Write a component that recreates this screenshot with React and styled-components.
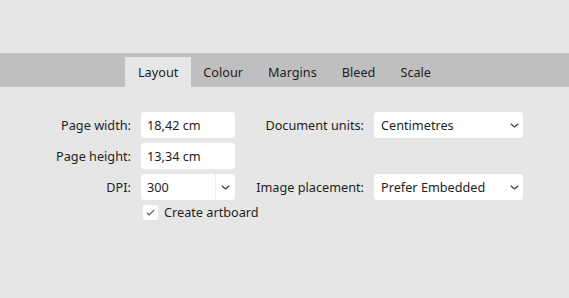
import React from 'react';
import styled, { createGlobalStyle } from 'styled-components';

const GlobalStyle = createGlobalStyle`
  html, body {
    margin: 0;
    padding: 0;
    background: #e6e6e6;
  }
  body {
    font-family: "Segoe UI", "Noto Sans", "Open Sans", sans-serif;
    color: #1e1e1e;
  }
`;

const Page = styled.div`
  width: 569px;
  height: 298px;
  background: #e6e6e6;
  padding-top: 53px;
  box-sizing: border-box;
`;

const TabBar = styled.div`
  height: 34px;
  background: #bfbfbf;
  display: flex;
  justify-content: center;
  align-items: flex-end;
`;

const Tab = styled.div`
  height: 30px;
  padding: 0 12.5px;
  display: flex;
  align-items: center;
  font-size: 12.7px;
  color: #1e1e1e;
  background: ${p => (p.$active ? '#e6e6e6' : 'transparent')};
`;

const Form = styled.div`
  display: grid;
  grid-template-columns: 131px 94px 119px 149px;
  grid-auto-rows: 26px;
  column-gap: 10px;
  row-gap: 5px;
  padding-top: 25px;
`;

const Label = styled.div`
  font-size: 12.7px;
  text-align: right;
  align-self: center;
  white-space: nowrap;
  color: #1e1e1e;
`;

const Field = styled.div`
  background: #fff;
  border-radius: 3px;
  display: flex;
  align-items: center;
  font-size: 12.7px;
  padding-left: ${p => p.$pad || 6}px;
  color: #1e1e1e;
  white-space: nowrap;
`;

const Value = styled.span`
  flex: 1;
`;

const ChevronBox = styled.div`
  width: ${p => p.$w}px;
  height: 100%;
  display: flex;
  align-items: center;
  justify-content: center;
  border-left: ${p => (p.$divider ? '1px solid #ececec' : 'none')};
  box-sizing: border-box;
`;

const CheckRow = styled.div`
  grid-column: 2 / span 3;
  align-self: start;
  display: flex;
  align-items: center;
  gap: 6px;
  font-size: 12.7px;
  margin-left: 2px;
  margin-top: -2px;
`;

const CheckBox = styled.div`
  width: 15px;
  height: 15px;
  background: #fff;
  border-radius: 2px;
  display: flex;
  align-items: center;
  justify-content: center;
`;

const Empty = styled.div``;

const Chevron = () => (
  <svg width="9" height="5" viewBox="0 0 9 5">
    <path d="M0.8 0.8 L4.5 4 L8.2 0.8" fill="none" stroke="#3a3a3a" strokeWidth="1.2" />
  </svg>
);

const Select = ({ value, divider, w }) => (
  <Field $pad={divider ? 6 : 7}>
    <Value>{value}</Value>
    <ChevronBox $w={w} $divider={divider}>
      <Chevron />
    </ChevronBox>
  </Field>
);

const tabs = ['Layout', 'Colour', 'Margins', 'Bleed', 'Scale'];

export default function App() {
  return (
    <>
      <GlobalStyle />
      <Page>
        <TabBar>
          {tabs.map(t => (
            <Tab key={t} $active={t === 'Layout'}>{t}</Tab>
          ))}
        </TabBar>
        <Form>
          <Label>Page width:</Label>
          <Field><Value>18,42 cm</Value></Field>
          <Label>Document units:</Label>
          <Select value="Centimetres" w={18} />

          <Label>Page height:</Label>
          <Field><Value>13,34 cm</Value></Field>
          <Empty />
          <Empty />

          <Label>DPI:</Label>
          <Select value="300" divider w={20} />
          <Label>Image placement:</Label>
          <Select value="Prefer Embedded" w={18} />

          <Empty />
          <CheckRow>
            <CheckBox>
              <svg width="9" height="7" viewBox="0 0 9 7">
                <path d="M0.8 3.6 L3.3 6 L8.2 0.8" fill="none" stroke="#555" strokeWidth="1.1" />
              </svg>
            </CheckBox>
            Create artboard
          </CheckRow>
        </Form>
      </Page>
    </>
  );
}
